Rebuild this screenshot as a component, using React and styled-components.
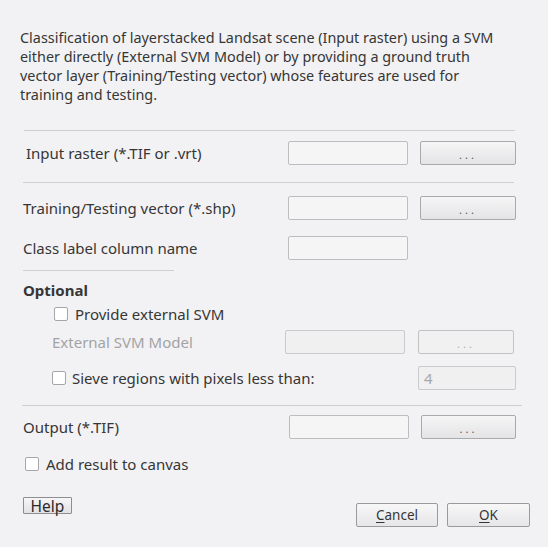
import React from "react";
import styled, { createGlobalStyle } from "styled-components";

const Global = createGlobalStyle`
  html, body { margin: 0; padding: 0; background: #f2f2f4; }
  body { font-family: "Noto Sans", "Open Sans", sans-serif; font-size: 15px; color: #363636; }
  * { box-sizing: border-box; }
`;

const Dialog = styled.div`
  width: 548px;
  height: 547px;
  display: flex;
  flex-direction: column;
  background: #f2f2f4;
`;

const Description = styled.p`
  margin: 28px 0 0 20px;
  width: 481px;
  font-size: 14.4px;
  line-height: 19px;
`;

const Rule = styled.div`
  height: 1px;
  background: #cfcfd1;
  margin-top: ${(p) => p.$mt}px;
  margin-left: ${(p) => p.$left}px;
  width: ${(p) => p.$width}px;
`;

const Row = styled.div`
  display: flex;
  align-items: center;
  height: ${(p) => p.$h || 24}px;
  margin-top: ${(p) => p.$mt}px;
  padding-left: ${(p) => p.$indent}px;
`;

const Label = styled.span`
  width: ${(p) => p.$w}px;
  color: ${(p) => (p.$disabled ? "#a3a3a5" : "#363636")};
  white-space: nowrap;
`;

const Heading = styled.div`
  margin-top: ${(p) => p.$mt}px;
  padding-left: 23px;
  line-height: 19px;
  font-weight: 700;
`;

const TextField = styled.div`
  width: ${(p) => p.$w || 120}px;
  height: 24px;
  border: 1px solid ${(p) => (p.$disabled ? "#cacacc" : "#bdbdbf")};
  border-radius: 2px;
  background: ${(p) => (p.$disabled ? "#f0f0f0" : "#f5f5f6")};
  color: #a8a8a8;
  padding-left: 5px;
  line-height: 22px;
  font-size: 15px;
`;

const BrowseButton = styled.div`
  width: ${(p) => p.$w || 96}px;
  height: 24px;
  margin-left: ${(p) => p.$gap}px;
  border: 1px solid ${(p) => (p.$disabled ? "#c2c2c4" : "#a9a9ab")};
  border-radius: 2px;
  background: ${(p) =>
    p.$disabled ? "#f1f1f2" : "linear-gradient(#f5f5f6, #e4e4e6)"};
  color: ${(p) => (p.$disabled ? "#b0b0b0" : "#555")};
  display: flex;
  justify-content: center;
  align-items: flex-end;
  padding-bottom: 4px;
  font-size: 11px;
  letter-spacing: 3px;
  line-height: 11px;
`;

const CheckRow = styled.label`
  display: flex;
  align-items: center;
  gap: ${(p) => p.$gap}px;
  width: ${(p) => p.$w}px;
`;

const Box = styled.span`
  width: 14px;
  height: 14px;
  border: 1px solid #a6a6a8;
  border-radius: 2px;
  background: #fff;
  flex: none;
`;

const Footer = styled.div`
  display: flex;
  justify-content: space-between;
  align-items: flex-start;
  margin-top: 24px;
  padding: 0 18px 0 23px;
`;

const HelpButton = styled.div`
  width: 49px;
  height: 17px;
  border: 1px solid #8e8e90;
  border-radius: 1px;
  background: linear-gradient(#f6f6f7, #e2e2e4);
  display: flex;
  align-items: center;
  justify-content: center;
  font-size: 15.5px;
  line-height: 15px;
  padding-top: 1px;
  color: #2a2a2a;
`;

const ButtonGroup = styled.div`
  display: flex;
  gap: 9px;
  margin-top: 6px;
`;

const DialogButton = styled.div`
  width: ${(p) => p.$w}px;
  height: 24px;
  border: 1px solid #9a9a9c;
  border-radius: 2px;
  background: linear-gradient(#f7f7f8, #e6e6e8);
  display: flex;
  align-items: center;
  justify-content: center;
  font-size: 13.5px;
  color: #363636;
  u { text-decoration: underline; text-underline-offset: 2px; }
`;

export default function App() {
  return (
    <>
      <Global />
      <Dialog>
        <Description>
          Classification of layerstacked Landsat scene (Input raster) using a SVM either
          directly (External SVM Model) or by providing a ground truth vector layer
          (Training/Testing vector) whose features are used for training and testing.
        </Description>

        <Rule $mt={26} $left={24} $width={491} />
        <Row $mt={10} $indent={26}>
          <Label $w={262}>Input raster (*.TIF or .vrt)</Label>
          <TextField />
          <BrowseButton $gap={12}>...</BrowseButton>
        </Row>

        <Rule $mt={17} $left={23} $width={491} />
        <Row $mt={13} $indent={23}>
          <Label $w={265}>Training/Testing vector (*.shp)</Label>
          <TextField />
          <BrowseButton $gap={12}>...</BrowseButton>
        </Row>
        <Row $mt={16} $indent={23}>
          <Label $w={265}>Class label column name</Label>
          <TextField />
        </Row>
        <Rule $mt={10} $left={23} $width={151} />

        <Heading $mt={10}>Optional</Heading>
        <Row $mt={4} $h={19} $indent={54}>
          <CheckRow $gap={7}>
            <Box />
            Provide external SVM
          </CheckRow>
        </Row>
        <Row $mt={7} $indent={52}>
          <Label $w={233} $disabled>External SVM Model</Label>
          <TextField $disabled />
          <BrowseButton $gap={13} $disabled>...</BrowseButton>
        </Row>
        <Row $mt={12} $indent={52}>
          <CheckRow $gap={6} $w={366}>
            <Box />
            Sieve regions with pixels less than:
          </CheckRow>
          <TextField $w={98} $disabled>4</TextField>
        </Row>

        <Rule $mt={15} $left={22} $width={500} />
        <Row $mt={9} $indent={23}>
          <Label $w={266}>Output (*.TIF)</Label>
          <TextField />
          <BrowseButton $gap={12} $w={95}>...</BrowseButton>
        </Row>
        <Row $mt={15} $h={19} $indent={25}>
          <CheckRow $gap={7}>
            <Box />
            Add result to canvas
          </CheckRow>
        </Row>

        <Footer>
          <HelpButton>Help</HelpButton>
          <ButtonGroup>
            <DialogButton $w={82}>
              <span><u>C</u>ancel</span>
            </DialogButton>
            <DialogButton $w={83}>
              <span><u>O</u>K</span>
            </DialogButton>
          </ButtonGroup>
        </Footer>
      </Dialog>
    </>
  );
}
